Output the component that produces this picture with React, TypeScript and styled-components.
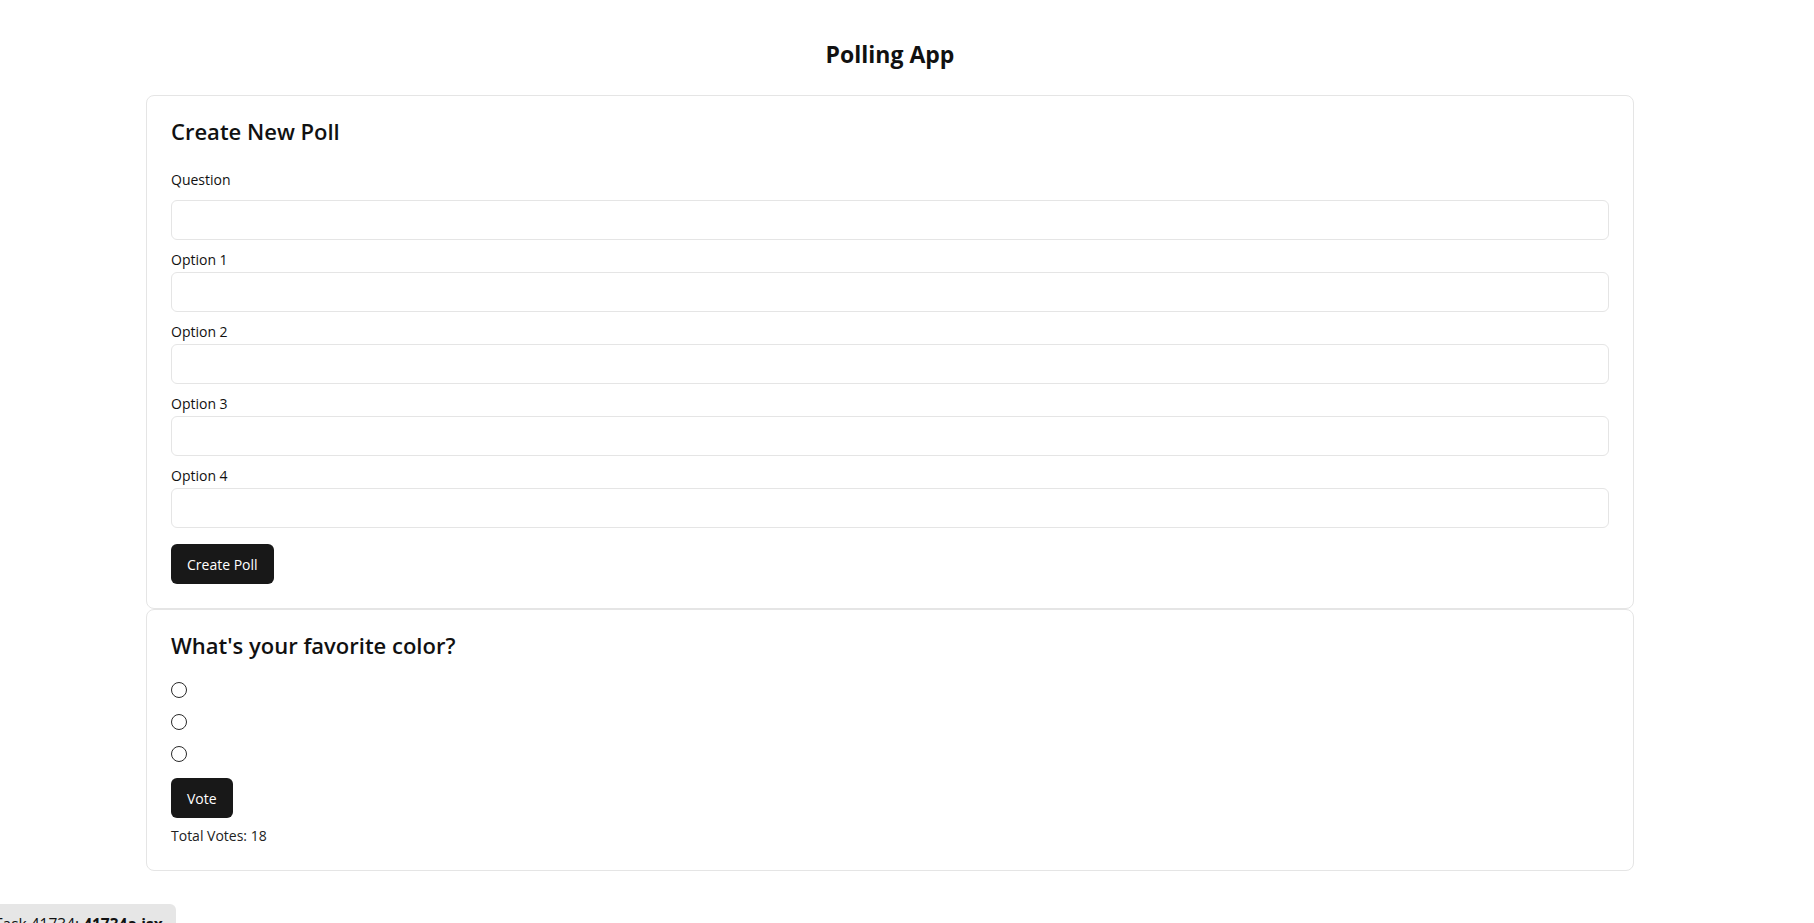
import React, { useState } from "react";
import styled, { createGlobalStyle } from "styled-components";

const GlobalStyle = createGlobalStyle`
  html, body { margin: 0; padding: 0; background: #ffffff; }
  body {
    font-family: "Open Sans", "Noto Sans", sans-serif;
    color: #111111;
  }
  * { box-sizing: border-box; }
`;

const Page = styled.div`
  padding: 40px 0 60px 146px;
`;

const Container = styled.main`
  width: 1488px;
  display: flex;
  flex-direction: column;
`;

const AppTitle = styled.h1`
  margin: 0 0 27px;
  text-align: center;
  font-size: 23px;
  line-height: 28px;
  font-weight: 700;
  color: #111;
`;

const Card = styled.section`
  border: 1px solid #e5e5e5;
  border-radius: 8px;
  padding: 24px;
  background: #fff;
`;

const CardTitle = styled.h2<{ $gap: number }>`
  margin: 0 0 ${(p) => p.$gap}px;
  font-size: 22px;
  line-height: 22px;
  padding-bottom: 2px;
  font-weight: 600;
  color: #111;
`;

const Field = styled.div<{ $labelGap: number }>`
  display: flex;
  flex-direction: column;
  gap: ${(p) => p.$labelGap}px;
  margin-bottom: 10px;
`;

const Label = styled.label`
  font-size: 14px;
  line-height: 20px;
  color: #111;
`;

const TextInput = styled.input`
  height: 40px;
  width: 100%;
  border: 1px solid #e5e5e5;
  border-radius: 6px;
  padding: 0 12px;
  font: inherit;
  font-size: 14px;
  outline: none;
  background: #fff;
`;

const Button = styled.button<{ $mt: number }>`
  align-self: flex-start;
  margin-top: ${(p) => p.$mt}px;
  height: 40px;
  padding: 0 16px;
  border: none;
  border-radius: 6px;
  background: #181818;
  color: #fff;
  font-family: inherit;
  font-size: 14px;
  font-weight: 500;
  cursor: pointer;
`;

const Form = styled.form`
  display: flex;
  flex-direction: column;
`;

const OptionList = styled.div`
  display: flex;
  flex-direction: column;
`;

const OptionRow = styled.label`
  height: 32px;
  display: flex;
  align-items: center;
  gap: 8px;
  font-size: 14px;
`;

const Radio = styled.input`
  appearance: none;
  width: 16px;
  height: 16px;
  margin: 0;
  border: 1px solid #2a2a2a;
  border-radius: 50%;
  background: #fff;
  display: grid;
  place-items: center;
  cursor: pointer;

  &:checked::after {
    content: "";
    width: 8px;
    height: 8px;
    border-radius: 50%;
    background: #181818;
  }
`;

const VoteBox = styled.div`
  display: flex;
  flex-direction: column;
`;

const Total = styled.p`
  margin: 8px 0 0;
  font-size: 14px;
  line-height: 20px;
  color: #222;
`;

const TaskTag = styled.div`
  position: fixed;
  left: -6px;
  bottom: -20px;
  height: 39px;
  width: 182px;
  padding: 10px 0 0 0;
  background: #e6e6e6;
  border-top-right-radius: 6px;
  font-family: "Open Sans", sans-serif;
  font-size: 15.5px;
  line-height: 20px;
  color: #111;
  white-space: nowrap;
`;

const optionKeys = ["Option 1", "Option 2", "Option 3", "Option 4"];

export default function App() {
  const [question, setQuestion] = useState("");
  const [options, setOptions] = useState(["", "", "", ""]);
  const [choice, setChoice] = useState<number | null>(null);
  const pollOptions = ["", "", ""];

  return (
    <>
      <GlobalStyle />
      <Page>
        <Container>
          <AppTitle>Polling App</AppTitle>
          <Card>
            <CardTitle $gap={26}>Create New Poll</CardTitle>
            <Form onSubmit={(e) => e.preventDefault()}>
              <Field $labelGap={10}>
                <Label htmlFor="q">Question</Label>
                <TextInput id="q" value={question} onChange={(e) => setQuestion(e.target.value)} />
              </Field>
              {optionKeys.map((k, i) => (
                <Field key={k} $labelGap={2}>
                  <Label htmlFor={`o${i}`}>{k}</Label>
                  <TextInput
                    id={`o${i}`}
                    value={options[i]}
                    onChange={(e) => {
                      const next = [...options];
                      next[i] = e.target.value;
                      setOptions(next);
                    }}
                  />
                </Field>
              ))}
              <Button type="submit" $mt={6}>Create Poll</Button>
            </Form>
          </Card>
          <Card>
            <CardTitle $gap={16}>What's your favorite color?</CardTitle>
            <VoteBox>
              <OptionList>
                {pollOptions.map((o, i) => (
                  <OptionRow key={i}>
                    <Radio type="radio" name="poll" checked={choice === i} onChange={() => setChoice(i)} />
                    {o}
                  </OptionRow>
                ))}
              </OptionList>
              <Button type="button" $mt={8}>Vote</Button>
              <Total>Total Votes: 18</Total>
            </VoteBox>
          </Card>
        </Container>
      </Page>
      <TaskTag>
        Task 41734: <b>41734a.jsx</b>
      </TaskTag>
    </>
  );
}
